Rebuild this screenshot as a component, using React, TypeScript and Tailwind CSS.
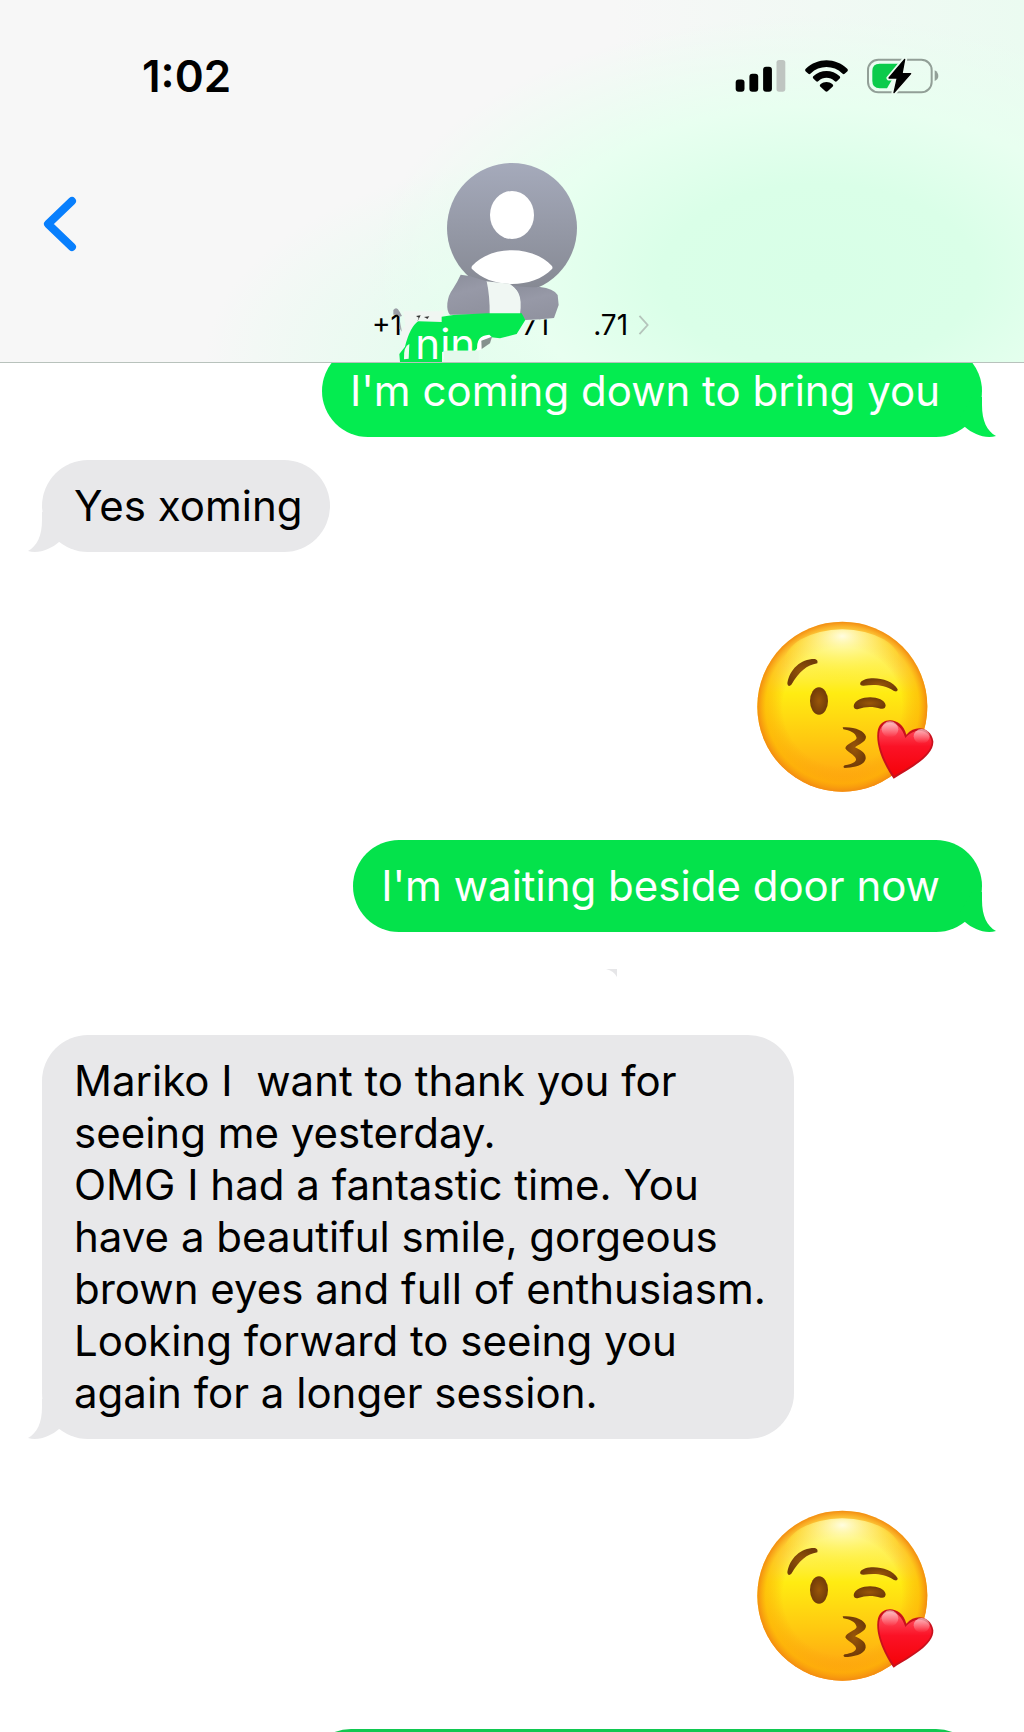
import { type ReactElement, type ReactNode } from 'react';

type Side = 'in' | 'out';

interface BubbleProps {
  side: Side;
  color: string;
  className?: string;
  children?: ReactNode;
}

/** Mobile signal, wifi and battery icons of the status bar */
function StatusIcons(): ReactElement {
  return (
    <div className="flex items-center gap-[19px]" role="img" aria-label="Signal, wifi, battery charging">
      <svg viewBox="0 0 152 98" className="h-8 w-[51px]">
        <rect x="0" y="60" width="27" height="37" rx="9" />
        <rect x="42" y="42" width="27" height="55" rx="9" />
        <rect x="84" y="21" width="27" height="76" rx="9" />
        <rect x="125" y="0" width="27" height="97" rx="8" fill="#bfc5c1" />
      </svg>
      <svg viewBox="0 0 131 98" className="h-8 w-[43px]">
        <path d="M2 27C38-8 93-8 129 27Q133 31 129 35L121 42Q118 45 114 41C87 15 44 15 17 41Q13 45 10 42L2 35Q-2 31 2 27Z" />
        <path d="M25 50C48 28 83 28 106 50Q109 53 106 57L97 65Q94 68 90 64C76 51 55 51 41 64Q37 68 34 65L25 57Q22 53 25 50Z" />
        <path d="M47 74C58 65 73 65 84 74Q88 78 84 82L69 96Q65.500 99 62 96L47 82Q43 78 47 74Z" />
      </svg>
      <svg viewBox="0 0 216 108" className="h-9 w-[72px]">
        <rect x="3" y="5" width="191" height="98" rx="31" fill="none" stroke="#929f97" strokeWidth="6" />
        <path d="M203 37Q214 43 214 54Q214 64 203 69Z" fill="#929f97" />
        <path d="M38 17H103L60 91H38Q16 91 16 69V39Q16 17 38 17Z" fill="#0bcb4b" />
        <path d="M113 4L66 60H91L81 104L131 47H105Z" stroke="#edfbf1" strokeWidth="15" strokeLinejoin="round" />
        <path d="M113 4L66 60H91L81 104L131 47H105Z" stroke="#000" strokeWidth="4" strokeLinejoin="round" />
      </svg>
    </div>
  );
}

/** Contact picture */
function Avatar(): ReactElement {
  return (
    <svg viewBox="0 0 130 130" className="size-[130px]" aria-hidden="true">
      <defs>
        <linearGradient id="avatar" x2="0" y2="1">
          <stop offset="0" stopColor="#a5aabb" />
          <stop offset="1" stopColor="#858892" />
        </linearGradient>
      </defs>
      <circle cx="65" cy="65" r="65" fill="url(#avatar)" />
      <ellipse cx="65" cy="52" rx="22" ry="24" fill="#fff" />
      <path d="M25 103C44 82 86 82 105 103Q106 105 105 106C86 126 44 126 25 106Q24 105 25 103Z" fill="#fff" />
    </svg>
  );
}

/** Brush strokes painted over the phone number */
function Smudges(): ReactElement {
  return (
    <svg viewBox="6 39 1020 597" className="absolute inset-0 h-[199px] w-[340px] overflow-visible" aria-hidden="true">
      <defs>
        <linearGradient id="smudge" x2="0.300" y2="1">
          <stop offset="0" stopColor="#8b8e9b" />
          <stop offset="0.500" stopColor="#9799a7" />
          <stop offset="1" stopColor="#9193a0" />
        </linearGradient>
      </defs>
      <path d="M190 484H310V516H240L205 560L186 600L184 545L196 524Z" fill="#f0f6f2" />
      <path d="M535 478H640V507L555 512L530 500Z" fill="#e6fbee" />
      <path d="M228 498L242 496L232 515L236 503ZM252 501L268 499L262 507L258 504Z" fill="#333" />
      <path d="M160 480Q170 468 178 484L186 498L178 500L172 494L160 494Z" fill="#9a9ea6" />
      <path d="M180 515L186 545L178 535Z" fill="#a9adb2" />
      <path d="M437 394L510 401Q540 420 543 450V495H446Q450 440 437 394Z" fill="#f0f7f3" />
      <path d="M362 374L388 378L440 394Q450 440 449 494H330Q320 485 322 460Q325 435 338 418Q352 396 362 374Z" fill="url(#smudge)" />
      <path d="M508 402Q545 415 600 411Q640 415 653 435L656 465L642 504L600 508L556 510L540 492Q546 450 535 428Q525 410 508 402Z" fill="url(#smudge)" />
      <path d="M180 636L178 612L195 590Q210 530 235 514L305 516V500L340 495L440 490H545L556 510L530 552L480 565L440 560L405 602H318L306 606V636Z" fill="#04e94f" />
      <text x="226" y="626" fontSize="126" fill="#fff">nin</text>
      <path d="M312 602H416V634H312Z" fill="#e4f9ec" />
      <path d="M412 602Q406 556 448 554L456 562Q430 566 424 598Z" fill="#fff" />
      <path d="M192 628Q190 588 208 582L206 626Z" fill="#effaf3" />
      <path d="M424 572L456 560L450 580L425 597Z" fill="#86918e" />
    </svg>
  );
}

function Header(): ReactElement {
  return (
    <header className="shrink-0 border-b border-[#b8c2bc] bg-[#f7f7f7] bg-[radial-gradient(ellipse_44%_72%_at_80%_76%,#d8ffe7_0%,#daffe8_35%,#e8fff0_65%,transparent_100%),radial-gradient(ellipse_42%_60%_at_62%_100%,#d9fde8_0%,#e4fcee_45%,transparent_100%),linear-gradient(90deg,#f7f7f7_60%,#ebfbf1_100%)]">
      <div className="flex items-center justify-between pt-[57px] pr-[85px] pl-[142px]">
        <time className="text-[44px] leading-[38px] font-semibold">1:02</time>
        <StatusIcons />
      </div>
      <nav className="mt-[68px] grid h-[199px] grid-cols-[1fr_340px_1fr] items-start">
        <button type="button" aria-label="Back" className="mt-8 ml-[42px] justify-self-start">
          <svg viewBox="0 0 36 58" className="h-[58px] w-9" fill="none" stroke="#087ffd" strokeWidth="8" strokeLinecap="round" strokeLinejoin="round">
            <path d="M30 6L6 29L30 52" />
          </svg>
        </button>
        <button type="button" className="relative flex h-full flex-col items-center">
          <Avatar />
          <span className="mt-4 flex w-full items-center pl-[30px] text-[28px] leading-8">
            <span>+1</span>
            <span className="ml-[120px]">71</span>
            <span className="ml-11">.71</span>
            <svg viewBox="0 0 12 22" className="ml-2.5 h-5 w-3" fill="none" stroke="#b5c4bb" strokeWidth="2">
              <path d="M1 1L10 11L1 21" />
            </svg>
          </span>
          <Smudges />
        </button>
      </nav>
    </header>
  );
}

/**
 * Message bubble, incoming on the left and outgoing on the right.
 * color holds the bg-* class of the bubble and the fill-* class of its tail.
 */
function Bubble({ side, color, className = '', children }: BubbleProps): ReactElement {
  const align = side === 'in' ? 'self-start pr-7 pl-8 text-black' : 'self-end pr-[42px] pl-7 text-white';
  const tail = side === 'in' ? '-left-4 -scale-x-100' : '-right-4';

  return (
    <div className={`relative min-h-[92px] shrink-0 rounded-[46px] py-5 text-[42px] leading-[52px] ${align} ${color} ${className}`}>
      {children}
      <svg viewBox="0 0 46 40" className={`absolute bottom-0 h-10 w-[46px] ${tail}`} aria-hidden="true">
        <path d="M30 0V8C30 24 35 34 44 39C33 42 21 37 13 30L8 20L20 0Z" />
      </svg>
    </div>
  );
}

function KissEmoji({ className = '' }: { className?: string }): ReactElement {
  return (
    <svg viewBox="51 63 531 513" className={`h-[171px] w-[177px] shrink-0 self-end ${className}`} role="img" aria-label="Face blowing a kiss">
      <defs>
        <linearGradient id="face" x2="0" y2="1">
          <stop offset="0" stopColor="#fff5a0" />
          <stop offset="0.180" stopColor="#fff27a" />
          <stop offset="0.420" stopColor="#ffec12" />
          <stop offset="0.700" stopColor="#ffc810" />
          <stop offset="1" stopColor="#ff9d12" />
        </linearGradient>
        <radialGradient id="rim">
          <stop offset="0.700" stopColor="#f99a0a" stopOpacity="0" />
          <stop offset="0.900" stopColor="#fdb005" stopOpacity="0.600" />
          <stop offset="1" stopColor="#f38b12" />
        </radialGradient>
        <radialGradient id="shine" cx="0.500" cy="0.100" r="0.650">
          <stop offset="0" stopColor="#fffde0" />
          <stop offset="1" stopColor="#fff200" stopOpacity="0" />
        </radialGradient>
        <radialGradient id="eye">
          <stop offset="0" stopColor="#985609" />
          <stop offset="1" stopColor="#713b08" />
        </radialGradient>
        <linearGradient id="heart" x2="0" y2="1">
          <stop offset="0" stopColor="#ff5d6c" />
          <stop offset="0.450" stopColor="#fb1226" />
          <stop offset="1" stopColor="#f50309" />
        </linearGradient>
        <linearGradient id="gloss" x2="0" y2="1">
          <stop offset="0" stopColor="#fff" stopOpacity="0.600" />
          <stop offset="1" stopColor="#fff" stopOpacity="0" />
        </linearGradient>
      </defs>
      <circle cx="307" cy="320" r="255" fill="url(#face)" />
      <circle cx="307" cy="320" r="255" fill="url(#rim)" />
      <ellipse cx="307" cy="190" rx="175" ry="102" fill="url(#shine)" />
      <g fill="url(#eye)">
        <ellipse cx="237" cy="303" rx="27" ry="41" />
        <path d="M142 250C149 207 183 176 225 177Q235 180 232 190C200 196 178 214 154 254Q143 264 142 250Z" />
        <path d="M361 248C376 226 454 231 473 268Q474 277 462 273C430 253 405 254 370 257Q358 257 361 248Z" />
        <path d="M341 318C345 284 433 283 437 316Q436 329 422 326C400 319 376 319 355 327Q342 330 341 318Z" />
        <path d="M308 382C341 379 374 392 378 410C378 427 354 433 345 442C361 450 379 458 377 476C373 497 340 503 314 504Q307 500 314 496C334 493 350 486 348 477C344 464 320 456 316 445C317 432 348 424 350 414C346 397 329 392 310 388Z" />
      </g>
      <path d="M461 536C440 508 402 438 414 388C426 348 486 352 499 404C528 371 574 383 580 424C582 468 511 505 461 536Z" fill="#c9101c" />
      <path d="M463 527C446 505 408 438 419 392C430 356 481 358 496 414C527 378 570 389 575 425C576 464 508 500 463 527Z" fill="url(#heart)" />
      <ellipse cx="450" cy="388" rx="25" ry="24" fill="url(#gloss)" />
      <ellipse cx="545" cy="409" rx="24" ry="22" fill="url(#gloss)" />
    </svg>
  );
}

export default function App(): ReactElement {
  return (
    <div className="flex h-screen flex-col overflow-hidden bg-white font-['Inter','Liberation_Sans',sans-serif] text-black">
      <Header />

      <main className="flex min-h-0 flex-1 flex-col overflow-hidden px-[42px]">
        <Bubble side="out" color="bg-[#04ec50] fill-[#04ec50]" className="-mt-[18px]">I'm coming down to bring you</Bubble>
        <Bubble side="in" color="bg-[#e8e8ea] fill-[#e8e8ea]" className="mt-[23px]">Yes xoming</Bubble>
        <KissEmoji className="mt-[69px] mr-12" />
        <Bubble side="out" color="bg-[#04e24b] fill-[#04e24b]" className="mt-12">I'm waiting beside door now</Bubble>

        <svg viewBox="0 0 12 8" className="mt-[37px] ml-[60%] h-2 w-3 shrink-0" aria-hidden="true">
          <path d="M0 0H11V8Q8 2 0 0Z" fill="#e6e6e8" />
        </svg>

        <Bubble side="in" color="bg-[#e8e8ea] fill-[#e8e8ea]" className="mt-[58px]">
          <p className="whitespace-pre">{`Mariko I  want to thank you for
seeing me yesterday.
OMG I had a fantastic time. You
have a beautiful smile, gorgeous
brown eyes and full of enthusiasm.
Looking forward to seeing you
again for a longer session.`}</p>
        </Bubble>
        <KissEmoji className="mt-[71px] mr-12" />
        <Bubble side="out" color="bg-[#10c850] fill-[#10c850]" className="mt-12 w-[72%]" />
      </main>
    </div>
  );
}
